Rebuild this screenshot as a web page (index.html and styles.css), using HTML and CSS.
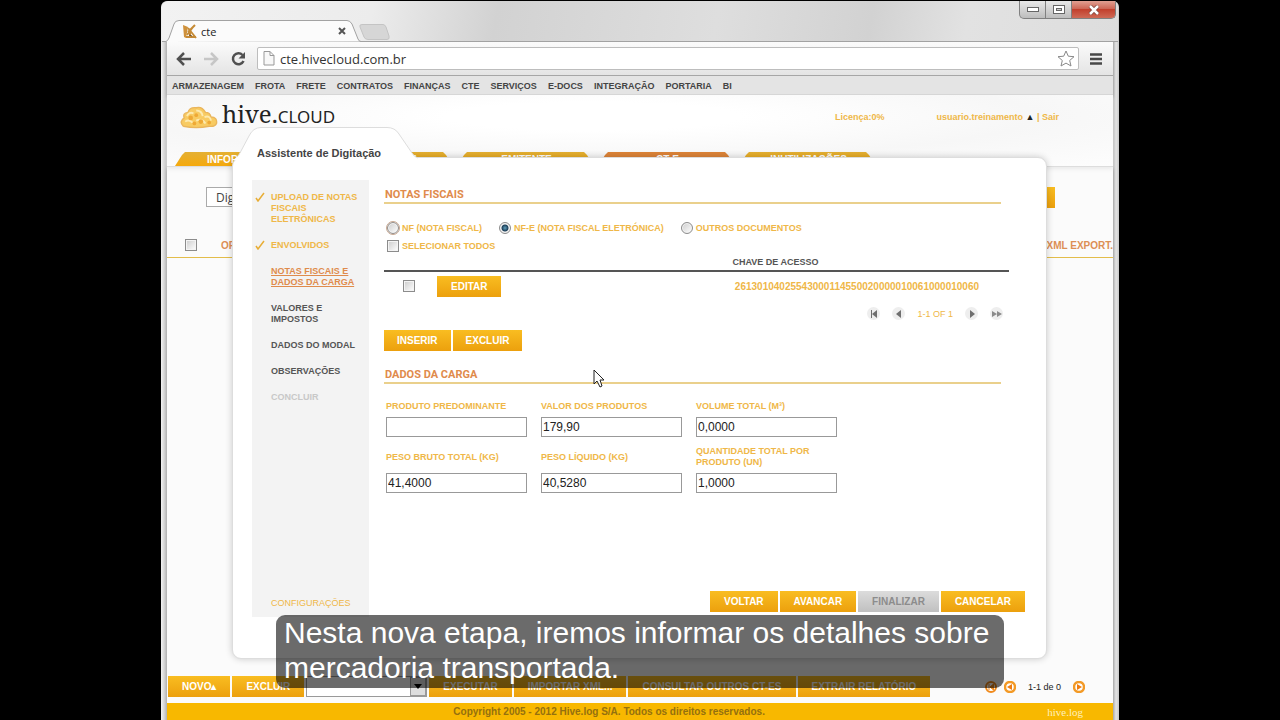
FILE: index.html
```html
<!DOCTYPE html>
<html lang="pt-BR">
<head>
    <meta charset="UTF-8">
    <meta name="viewport" content="width=device-width, initial-scale=1.0">
    <title>cte</title>
    <link rel="stylesheet" href="styles.css">
</head>
<body>
<div class="browser">
    <div class="titlebar">
        <div class="browser-tab">
            <svg class="tab-shape" width="196" height="22" viewBox="0 0 196 22"><path d="M0 22 Q3 21 4 18 L9 4 Q10 .5 14 .5 H182 Q185 .5 187 4 L193 19 Q194 21.500 196 21.500" fill="#fbfbfb" stroke="#a2a2a2"/></svg>
            <svg class="favicon" width="15" height="15" viewBox="0 0 15 15"><path d="M1 1 L6 3 L4 14 L2 13 Z" fill="#cf913b"/><path d="M6 8 L13 1 M5 11 L11 3 M6 4 L14 14 M4 13 H14 M8 7 V14" stroke="#c58a35" stroke-width="2" fill="none"/><path d="M7 11 L10 12" stroke="#6f5027"/></svg>
            <span class="tab-title">cte</span>
            <button class="tab-close" aria-label="Fechar aba"><svg width="8" height="8" viewBox="0 0 8 8"><path d="M1 1 L7 7 M7 1 L1 7" stroke="#555" stroke-width="2"/></svg></button>
        </div>
        <svg class="new-tab" width="32" height="16" viewBox="0 0 32 16"><path d="M3 .5 H24 Q26 .5 27 3 L30 12 Q31 15.500 28 15.500 H9 Q6 15.500 5 13 L1 3 Q0 .5 3 .5" fill="#d6d6d6" stroke="#c4c4c4"/></svg>
        <div class="window-buttons">
            <button aria-label="Minimizar"><svg width="12" height="6" viewBox="0 0 12 6"><rect x=".5" y=".5" width="11" height="4" fill="#fff" stroke="#666"/></svg></button>
            <button aria-label="Maximizar"><svg width="12" height="10" viewBox="0 0 12 10"><rect x=".5" y=".5" width="11" height="8" fill="#fff" stroke="#666"/><rect x="3.500" y="3.500" width="5" height="2" fill="#ccc" stroke="#666"/></svg></button>
            <button class="window-close" aria-label="Fechar"><svg width="12" height="10" viewBox="0 0 12 10"><path d="M2 1 L10 9 M10 1 L2 9" stroke="#7b4037" stroke-width="4"/><path d="M2 1 L10 9 M10 1 L2 9" stroke="#fff" stroke-width="2.500"/></svg></button>
        </div>
    </div>
    <div class="toolbar">
        <button aria-label="Voltar"><svg width="16" height="14" viewBox="0 0 16 14"><path d="M8 1 L2 7 L8 13 M2 7 H15" fill="none" stroke="#505050" stroke-width="2.500"/></svg></button>
        <button aria-label="Adiantar"><svg width="16" height="14" viewBox="0 0 16 14"><path d="M8 1 L14 7 L8 13 M14 7 H1" fill="none" stroke="#c6c6c6" stroke-width="2.500"/></svg></button>
        <button aria-label="Recarregar"><svg width="16" height="16" viewBox="0 0 16 16"><path d="M12.500 4 A5.500 5.500 0 1 0 13.500 10" fill="none" stroke="#505050" stroke-width="2.500"/><path d="M15 1 V7.500 H8.500 Z" fill="#505050"/></svg></button>
        <div class="address">
            <svg width="12" height="15" viewBox="0 0 12 15"><path d="M1 .5 H7 L11 4.500 V14 H1 Z M7 .5 V4.500 H11" fill="#f8f8f8" stroke="#999"/></svg>
            <input type="text" aria-label="Endereço" value="cte.hivecloud.com.br">
            <svg width="18" height="17" viewBox="0 0 18 17"><path d="M9 1 L11.300 6.200 L17 6.700 L12.700 10.500 L14 16 L9 13.100 L4 16 L5.300 10.500 L1 6.700 L6.700 6.200 Z" fill="#fff" stroke="#888"/></svg>
        </div>
        <button aria-label="Menu"><svg width="12" height="12" viewBox="0 0 12 12"><path d="M0 1.500 H12 M0 6 H12 M0 10.500 H12" stroke="#484848" stroke-width="2.500"/></svg></button>
    </div>
    <nav class="menu">
        <a href="#">ARMAZENAGEM</a>
        <a href="#">FROTA</a>
        <a href="#">FRETE</a>
        <a href="#">CONTRATOS</a>
        <a href="#">FINANÇAS</a>
        <a href="#">CTE</a>
        <a href="#">SERVIÇOS</a>
        <a href="#">E-DOCS</a>
        <a href="#">INTEGRAÇÃO</a>
        <a href="#">PORTARIA</a>
        <a href="#">BI</a>
    </nav>
    <div class="page">
        <header>
            <div class="header-top">
                <div class="logo">
                    <svg width="40" height="24" viewBox="0 0 42 26">
                        <path d="M4 23 Q-1 18 5 14 Q3 9 9 8 Q11 2 18 3 Q24 1 28 8 Q33 8 34 13 Q41 13 40 20 Q38 24 32 23 Q18 26 4 23" fill="#f8cb62" stroke="#eab65c" stroke-width="1.500"/>
                        <path d="M8 12 Q10 7 15 9 M18 6 Q24 6 25 12 M27 13 Q33 11 34 17 M6 18 Q10 15 14 19 M18 17 Q24 14 28 20" fill="none" stroke="#fdeab0" stroke-width="2"/>
                        <g fill="#efa935"><circle cx="12" cy="14" r="2.500"/><circle cx="18" cy="11" r="2"/><circle cx="23" cy="18" r="2.500"/><circle cx="32" cy="19" r="2"/><circle cx="16" cy="20" r="2"/></g>
                    </svg>
                    <div class="logo-name"><span class="logo-hive">hive.</span><span class="logo-cloud">CLOUD</span></div>
                </div>
                <span class="license">Licença:0%</span>
                <div class="user"><a href="#">usuario.treinamento</a> <span class="user-arrow">▲</span> | <a href="#">Sair</a></div>
            </div>
            <div class="page-tabs">
                <a href="#">INFORMAÇÕES</a>
                <a href="#">REMETENTE</a>
                <a href="#">EMITENTE</a>
                <a href="#" class="current">CT-E</a>
                <a href="#">INUTILIZAÇÕES</a>
            </div>
        </header>
        <div class="filter">
            <select aria-label="Filtro"><option>Digitação</option></select>
            <button class="btn">BUSCAR</button>
        </div>
        <div class="list-head">
            <input type="checkbox" aria-label="Selecionar lista">
            <span>OPERAÇÃO</span>
            <span class="list-last">XML EXPORT.</span>
        </div>
        <div class="actions">
            <button class="btn">NOVO▴</button>
            <button class="btn">EXCLUIR</button>
            <div class="action-box">
                <select aria-label="Ação"><option></option></select>
                <span><svg width="8" height="5" viewBox="0 0 8 5"><path d="M0 0 H8 L4 5 Z" fill="#000"/></svg></span>
            </div>
            <button class="btn">EXECUTAR</button>
            <button class="btn">IMPORTAR XML...</button>
            <button class="btn">CONSULTAR OUTROS CT-ES</button>
            <button class="btn">EXTRAIR RELATÓRIO</button>
            <div class="list-pager">
                <svg width="12" height="12" viewBox="0 0 12 12"><circle cx="6" cy="6" r="5" fill="#fff" stroke="#f08a1c" stroke-width="2"/><path d="M4 3 V9 M8.500 3 L5 6 L8.500 9 Z" fill="#f08a1c" stroke="#f08a1c"/></svg>
                <svg width="12" height="12" viewBox="0 0 12 12"><circle cx="6" cy="6" r="5" fill="#fff" stroke="#f39a26" stroke-width="2.500"/><path d="M8 3 V9 L3 6 Z" fill="#ef7d10"/></svg>
                <span>1-1 de 0</span>
                <svg width="12" height="12" viewBox="0 0 12 12"><circle cx="6" cy="6" r="5" fill="#fff" stroke="#f39a26" stroke-width="2.500"/><path d="M4 3 V9 L9 6 Z" fill="#ef7d10"/></svg>
            </div>
        </div>
        <footer>
            <span class="copyright">Copyright 2005 - 2012 Hive.log S/A. Todos os direitos reservados.</span>
            <span class="footer-brand">hive.log</span>
        </footer>

        <div class="dialog">
            <div class="dialog-title">
                <svg width="190" height="33" viewBox="0 0 190 33"><path d="M0 33 Q6 31 9 24 L17 9 Q21 .5 29 .5 H155 Q163 .5 167 7 L180 26 Q183 31 190 32 V33 Z" fill="#fff"/><path d="M5 30 Q7 28 9 24 L17 9 Q21 .5 29 .5 H155 Q163 .5 167 7 L180 26 Q182 30 186 31" fill="none" stroke="#ddd"/></svg>
                <h2>Assistente de Digitação</h2>
            </div>
            <ul class="steps">
                <li class="done"><svg width="10" height="10" viewBox="0 0 10 10"><path d="M1 6 L3 9 L9 1" fill="none" stroke="#e8ad35" stroke-width="1.500"/></svg><a href="#">UPLOAD DE NOTAS FISCAIS ELETRÔNICAS</a></li>
                <li class="done"><svg width="10" height="10" viewBox="0 0 10 10"><path d="M1 6 L3 9 L9 1" fill="none" stroke="#e8ad35" stroke-width="1.500"/></svg><a href="#">ENVOLVIDOS</a></li>
                <li class="active"><a href="#">NOTAS FISCAIS E DADOS DA CARGA</a></li>
                <li><a href="#">VALORES E IMPOSTOS</a></li>
                <li><a href="#">DADOS DO MODAL</a></li>
                <li><a href="#">OBSERVAÇÕES</a></li>
                <li class="disabled">CONCLUIR</li>
                <li class="config"><a href="#">CONFIGURAÇÕES</a></li>
            </ul>
            <div class="content">
                <h3>NOTAS FISCAIS</h3>
                <div class="doc-types">
                    <label class="focused"><input type="radio" name="doc">NF (NOTA FISCAL)</label>
                    <label><input type="radio" name="doc" checked>NF-E (NOTA FISCAL ELETRÓNICA)</label>
                    <label><input type="radio" name="doc">OUTROS DOCUMENTOS</label>
                </div>
                <label class="select-all"><input type="checkbox">SELECIONAR TODOS</label>
                <table>
                    <thead>
                    <tr><th class="col-check"></th><th class="col-edit"></th><th>CHAVE DE ACESSO</th></tr>
                    </thead>
                    <tbody>
                    <tr>
                        <td><input type="checkbox" aria-label="Selecionar nota"></td>
                        <td><button class="btn">EDITAR</button></td>
                        <td>26130104025543000114550020000010061000010060</td>
                    </tr>
                    </tbody>
                </table>
                <div class="pager">
                    <button aria-label="Primeira"><svg width="8" height="8" viewBox="0 0 8 8"><path d="M1 0 H2 V8 H1 Z M7 0 V8 L2 4 Z" fill="#6f6f6f"/></svg></button>
                    <button aria-label="Anterior"><svg width="8" height="8" viewBox="0 0 8 8"><path d="M6 0 V8 L1 4 Z" fill="#6f6f6f"/></svg></button>
                    <span>1-1 OF 1</span>
                    <button aria-label="Próxima"><svg width="8" height="8" viewBox="0 0 8 8"><path d="M2 0 V8 L7 4 Z" fill="#6f6f6f"/></svg></button>
                    <button aria-label="Última"><svg width="10" height="8" viewBox="0 0 10 8"><path d="M0 1 V7 L5 4 Z M5 1 V7 L10 4 Z" fill="#8a8a8a"/></svg></button>
                </div>
                <div class="buttons">
                    <button class="btn">INSERIR</button>
                    <button class="btn">EXCLUIR</button>
                </div>
                <h3>DADOS DA CARGA</h3>
                <div class="fields">
                    <div class="field"><label for="produto">PRODUTO PREDOMINANTE</label><input type="text" id="produto"></div>
                    <div class="field"><label for="valor">VALOR DOS PRODUTOS</label><input type="text" id="valor" value="179,90"></div>
                    <div class="field"><label for="volume">VOLUME TOTAL (M³)</label><input type="text" id="volume" value="0,0000"></div>
                    <div class="field"><label for="bruto">PESO BRUTO TOTAL (KG)</label><input type="text" id="bruto" value="41,4000"></div>
                    <div class="field"><label for="liquido">PESO LÍQUIDO (KG)</label><input type="text" id="liquido" value="40,5280"></div>
                    <div class="field"><label for="quantidade">QUANTIDADE TOTAL POR PRODUTO (UN)</label><input type="text" id="quantidade" value="1,0000"></div>
                </div>
                <div class="buttons wizard-buttons">
                    <button class="btn">VOLTAR</button>
                    <button class="btn">AVANCAR</button>
                    <button class="btn" disabled>FINALIZAR</button>
                    <button class="btn">CANCELAR</button>
                </div>
            </div>
        </div>
    </div>
</div>
<svg class="cursor" width="13" height="19" viewBox="0 0 13 19"><path d="M1 1 V15 L4 12 L7 18 L9 17 L7 11 H11 Z" fill="#fff" stroke="#222"/></svg>
<p class="caption">Nesta nova etapa, iremos informar os detalhes sobre mercadoria transportada.</p>
</body>
</html>
```
FILE: styles.css
```css
* {
    box-sizing: border-box;
}

body {
    position: relative;
    margin: 0;
    height: 100vh;
    min-height: 720px;
    padding: 1px 161px 0;
    background: #000000;
    font-family: 'Liberation Sans', Arial, sans-serif;
    font-size: 9px;
    font-weight: bold;
    overflow: hidden;
}

a {
    color: inherit;
    text-decoration: none;
}

button {
    border: none;
    padding: 0;
    background: none;
    font-family: inherit;
    cursor: pointer;
}

svg {
    display: block;
    flex: none;
}

.browser {
    display: flex;
    flex-direction: column;
    height: 100%;
    padding: 0 6px;
    border-radius: 6px 6px 0 0;
    background: linear-gradient(90deg, #f2f2f2 0, #d8d8d8 3px, #b0b0b0 6px, #d0d0d0 50%, #a8a8a8 calc(100% - 6px), #e4e4e4 calc(100% - 3px), #c8c8c8 100%);
}

/* window frame */
.titlebar {
    display: flex;
    align-items: flex-end;
    height: 41px;
    margin: 0 -5px;
    padding: 0 2px 0 5px;
    border-bottom: 1px solid #a2a2a2;
    border-radius: 6px 6px 0 0;
    background: linear-gradient(100deg, #f2f2f2 0, #ececec 22%, #d2d2d2 35%, #dedede 58%, #d2d2d2 74%, #e2e2e2 84%, #dddddd 100%);
}

.browser-tab {
    position: relative;
    display: flex;
    align-items: center;
    width: 194px;
    height: 22px;
    margin-bottom: -1px;
    padding: 0 15px;
}

.tab-shape {
    position: absolute;
    top: 0;
    left: -2px;
}

.favicon,
.tab-title,
.tab-close {
    position: relative;
}

.tab-title {
    margin-left: 4px;
    font-family: 'Open Sans', sans-serif;
    font-size: 11px;
    font-weight: normal;
    color: #222222;
}

.tab-close {
    margin-left: auto;
}

.new-tab {
    margin: 0 0 1px -2px;
}

.window-buttons {
    display: flex;
    align-self: flex-start;
    margin-left: auto;
    border: 1px solid #808080;
    border-top: none;
    border-radius: 0 0 5px 5px;
    background: linear-gradient(#e8e8e8, #bdbdbd);
    overflow: hidden;
}

.window-buttons button {
    display: flex;
    align-items: center;
    justify-content: center;
    width: 26px;
    height: 17px;
    border-right: 1px solid #808080;
}

.window-buttons .window-close {
    width: 43px;
    border-right: none;
    background: linear-gradient(#e0a092, #cb6150 50%, #c2402d 50%, #cf6a56);
}

.toolbar {
    display: flex;
    align-items: center;
    gap: 11px;
    height: 34px;
    padding: 0 11px 0 9px;
    border-bottom: 1px solid #a6a6a6;
    background: linear-gradient(#fbfbfb, #e4e4e4);
}

.address {
    display: flex;
    flex: 1;
    align-items: center;
    height: 23px;
    padding: 0 3px 0 5px;
    border: 1px solid #bdbdbd;
    border-radius: 2px;
    background: #ffffff;
}

.address input {
    flex: 1;
    border: none;
    padding: 0 5px;
    font-family: 'Open Sans', sans-serif;
    font-size: 13px;
    color: #333333;
}

.menu {
    display: flex;
    align-items: center;
    gap: 11px;
    height: 19px;
    padding: 2px 5px 0;
    border-bottom: 1px solid #d4d4d4;
    background: #e4e4e4;
    color: #444444;
}

.page {
    position: relative;
    display: flex;
    flex: 1;
    flex-direction: column;
    background: #fbfbfb;
}

header {
    display: flex;
    flex-direction: column;
    height: 72px;
    border-bottom: 1px solid #dddddd;
    background: radial-gradient(ellipse at 45% 30%, #ffffff 20%, #f7f7f7 60%, #fdfdfd 100%);
    box-shadow: 0 2px 4px #eaeaea;
}

.header-top {
    display: flex;
    align-items: center;
    height: 44px;
    padding: 0 54px 0 12px;
    color: #efb748;
}

.logo {
    display: flex;
    align-items: center;
    gap: 3px;
    margin-right: auto;
    color: #222222;
    font-weight: normal;
}

.logo-name {
    line-height: 30px;
}

.logo-hive {
    font-family: 'Noto Serif', 'DejaVu Serif', serif;
    font-size: 24px;
}

.logo-cloud {
    font-family: 'Noto Sans', sans-serif;
    font-size: 17px;
}

.license {
    margin-right: 52px;
}

.user-arrow,
.list-pager span {
    color: #222222;
}

.page-tabs {
    display: flex;
    margin-top: auto;
    padding-left: 7px;
}

.page-tabs a {
    width: 141px;
    height: 14px;
    background: linear-gradient(#e4b033, #f5a90c);
    clip-path: polygon(1px 100%, 8px 3px, 11px 0, 128px 0, 131px 3px, 138px 100%);
    color: #ffffff;
    font-size: 10px;
    line-height: 15px;
    text-align: center;
}

.page-tabs .current {
    background: #dd8438;
}

.btn {
    height: 21px;
    padding: 0 14px;
    background: linear-gradient(#f9bd21, #eca00d);
    color: #ffffff;
    font-size: 10px;
    font-weight: bold;
    white-space: nowrap;
}

.btn:disabled {
    background: linear-gradient(#dcdcdc, #c0c0c0);
    color: #8c8c8c;
}

.filter {
    display: flex;
    justify-content: space-between;
    padding: 20px 58px 0 39px;
}

.filter select {
    width: 140px;
    height: 20px;
    padding: 0 9px;
    border: 1px solid #aaaaaa;
    background: #ffffff;
    color: #444444;
    font-family: 'Open Sans', sans-serif;
    font-size: 12px;
    appearance: none;
}

.list-head {
    display: flex;
    align-items: center;
    gap: 24px;
    height: 25px;
    margin-top: 25px;
    padding-left: 18px;
    border-bottom: 1px solid #e3bd4a;
    color: #dd8f55;
    font-size: 10px;
}

.list-last {
    margin-left: auto;
}

input[type="checkbox"],
input[type="radio"] {
    flex: none;
    width: 12px;
    height: 12px;
    margin: 0;
    border: 1px solid #8c8c8c;
    background: linear-gradient(135deg, #cccccc, #ffffff);
    box-shadow: inset 0 0 0 1px #f4f4f4;
    appearance: none;
}

input[type="radio"] {
    border-radius: 50%;
}

input[type="radio"]:checked {
    background: radial-gradient(circle, #5fa0bd 0, #1d3f58 3px, #eeeeee 4px);
}

.actions {
    display: flex;
    align-items: center;
    gap: 2px;
    margin-top: auto;
    padding: 0 28px 6px 1px;
}

.action-box {
    display: flex;
    width: 121px;
    height: 21px;
    border: 1px solid #999999;
    background: #ffffff;
}

.action-box select {
    flex: 1;
    min-width: 0;
    border: none;
    background: none;
    appearance: none;
}

.action-box span {
    display: flex;
    align-items: center;
    justify-content: center;
    width: 16px;
    border: 1px solid #999999;
    background: #dddddd;
}

.list-pager {
    display: flex;
    align-items: center;
    gap: 7px;
    margin-left: auto;
}

.list-pager span {
    margin: 0 5px;
    font-weight: normal;
}

footer {
    display: flex;
    align-items: center;
    height: 17px;
    padding: 0 30px;
    background: #f8b800;
}

.copyright {
    flex: 1;
    padding-right: 26px;
    color: #94700f;
    font-size: 10px;
    text-align: center;
}

.footer-brand {
    color: #fff0bd;
    font-family: 'Liberation Serif', serif;
    font-size: 11px;
    font-weight: normal;
}

/* wizard over the list page */
.dialog {
    position: absolute;
    top: 62px;
    right: 66px;
    bottom: 61px;
    left: 65px;
    display: flex;
    gap: 15px;
    padding: 22px 21px 41px 19px;
    border: 1px solid #dddddd;
    border-radius: 9px;
    background: #ffffff;
    box-shadow: 0 0 7px rgba(0, 0, 0, 0.2);
}

.dialog-title {
    position: absolute;
    top: -31px;
    left: -1px;
}

.dialog-title h2 {
    position: absolute;
    top: 19px;
    left: 25px;
    margin: 0;
    color: #444444;
    font-size: 11px;
    line-height: 14px;
    white-space: nowrap;
}

.steps {
    display: flex;
    flex: none;
    flex-direction: column;
    gap: 15px;
    width: 117px;
    margin: 0;
    padding: 12px 0 8px 19px;
    background: #f3f3f3;
    color: #555555;
    line-height: 11px;
    list-style: none;
}

.steps li {
    position: relative;
    padding-right: 6px;
}

.steps svg {
    position: absolute;
    left: -16px;
}

.steps .done,
.steps .config {
    color: #efb748;
}

.steps .active {
    color: #df8b4c;
    text-decoration: underline;
}

.steps .disabled {
    color: #c8c8c8;
}

.steps .config {
    margin-top: auto;
    font-weight: normal;
}

.content {
    display: flex;
    flex: 1;
    flex-direction: column;
    align-items: stretch;
    padding-top: 8px;
    color: #efb748;
}

h3 {
    margin: 0 24px 0 0;
    padding-left: 1px;
    border-bottom: 2px solid #ead08c;
    color: #df8b4c;
    font-family: 'Roboto', sans-serif;
    font-size: 11px;
    font-weight: bold;
    line-height: 14px;
}

.doc-types {
    display: flex;
    gap: 17px;
    margin-top: 17px;
    padding-left: 3px;
}

.doc-types label,
.select-all {
    display: flex;
    align-items: center;
    gap: 3px;
    height: 14px;
}

.doc-types .focused input {
    outline: 1px solid #c8a892;
}

.select-all {
    margin-top: 4px;
    padding-left: 3px;
}

table {
    width: calc(100% - 16px);
    margin-top: 3px;
    border-collapse: collapse;
    table-layout: fixed;
}

th {
    height: 15px;
    padding: 0 0 2px;
    border-bottom: 2px solid #555555;
    color: #555555;
    text-align: center;
}

.col-check {
    width: 53px;
}

.col-edit {
    width: 105px;
}

td {
    height: 29px;
    padding: 0;
    font-size: 10px;
}

td:first-child {
    padding-left: 19px;
}

td:last-child {
    padding-right: 30px;
    text-align: right;
}

td input {
    display: block;
}

.pager {
    display: flex;
    align-items: center;
    justify-content: flex-end;
    gap: 12px;
    margin-top: 7px;
    padding-right: 22px;
    font-weight: normal;
}

.pager button {
    display: flex;
    align-items: center;
    justify-content: center;
    width: 13px;
    height: 13px;
    border-radius: 50%;
    background: #eeeeee;
}

.buttons {
    display: flex;
    gap: 2px;
    margin-top: 10px;
}

.buttons .btn {
    padding: 0 13px;
}

.buttons + h3 {
    margin-top: 17px;
}

.fields {
    display: grid;
    grid-template-columns: 141px 141px 141px;
    gap: 9px 14px;
    margin-top: 17px;
    padding-left: 2px;
}

.field {
    display: flex;
    flex-direction: column;
    gap: 5px;
    line-height: 11px;
}

.field label {
    display: flex;
    flex: 1;
    align-items: center;
}

.field input {
    width: 100%;
    height: 20px;
    padding: 0 1px;
    border: 1px solid #999999;
    color: #222222;
    font-family: inherit;
    font-size: 12px;
}

.wizard-buttons {
    justify-content: flex-end;
    margin-top: auto;
    margin-bottom: 5px;
}

.wizard-buttons .btn {
    padding: 0 14px;
}

.cursor {
    position: absolute;
    top: 369px;
    left: 593px;
}

/* video subtitle */
.caption {
    position: absolute;
    right: 0;
    bottom: 32px;
    left: 0;
    width: 728px;
    margin: 0 auto;
    padding: 0 8px 3px;
    border-radius: 9px;
    background: rgba(0, 0, 0, 0.58);
    color: #ffffff;
    font-size: 30px;
    font-weight: normal;
    line-height: 35px;
}
```
